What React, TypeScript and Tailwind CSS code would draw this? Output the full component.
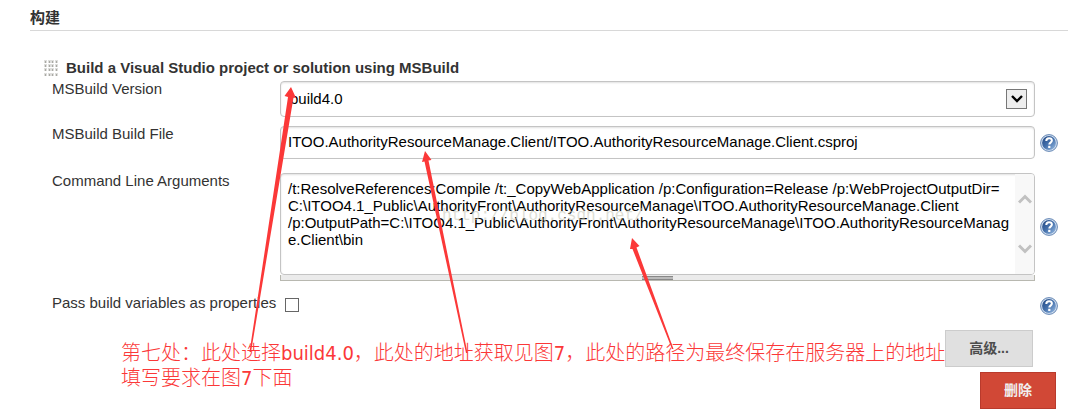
import { useState, type ReactNode } from "react";

const FIELD =
  "w-full rounded border border-[#c4c4c4] bg-white text-black shadow-[inset_0_1px_2px_rgba(0,0,0,0.12)]";

const ARGUMENTS = [
  "/t:ResolveReferences;Compile /t:_CopyWebApplication /p:Configuration=Release /p:WebProjectOutputDir=",
  "C:\\ITOO4.1_Public\\AuthorityFront\\AuthorityResourceManage\\ITOO.AuthorityResourceManage.Client",
  "/p:OutputPath=C:\\ITOO4.1_Public\\AuthorityFront\\AuthorityResourceManage\\ITOO.AuthorityResourceManag",
  "e.Client\\bin",
].join("\n");

const HelpButton = () => (
  <button type="button" aria-label="Help" className="block size-[18px]">
    <svg viewBox="0 0 18 18" className="size-full">
      <defs>
        <linearGradient id="help" x1="0" y1="0" x2="1" y2="1">
          <stop offset="0" stopColor="#1f4580" />
          <stop offset="0.5" stopColor="#4672ad" />
          <stop offset="1" stopColor="#9abde4" />
        </linearGradient>
      </defs>
      <circle cx="9" cy="9" r="8.4" fill="#d3e0f0" stroke="#6486b4" />
      <circle cx="9" cy="9" r="6.9" fill="url(#help)" />
      <path
        d="M6.3 6.9C6.3 5 7.5 4.2 9.1 4.2c1.6 0 2.8.9 2.8 2.4 0 2-2.6 2-2.6 4"
        fill="none"
        stroke="#fff"
        strokeWidth="2"
      />
      <rect x="8.2" y="11.8" width="2.2" height="2.2" fill="#fff" />
    </svg>
  </button>
);

type RowProps = {
  label: string;
  id: string;
  help?: boolean;
  className?: string;
  children: ReactNode;
};

const Row = ({ label, id, help, className, children }: RowProps) => (
  <div className={`flex ${className ?? ""}`}>
    <label htmlFor={id} className="w-[228px] shrink-0 leading-4 whitespace-nowrap">
      {label}
    </label>
    <div className="min-w-0 flex-1">{children}</div>
    <div className="ml-[5px] flex w-[18px] shrink-0 items-center">
      {help && <HelpButton />}
    </div>
  </div>
);

const DragHandle = () => (
  <svg viewBox="0 0 14 16" className="h-4 w-[14px]">
    {[0, 4, 7, 11].map((x) =>
      [0, 4, 8, 13].map((y) => (
        <g key={`${x}-${y}`}>
          <rect x={x} y={y} width="3" height="3" fill="#dededc" />
          <rect x={x + 1} y={y + 1} width="1" height="2" fill="#a9a9a4" />
        </g>
      ))
    )}
  </svg>
);

const Chevron = ({ down }: { down?: boolean }) => (
  <svg viewBox="0 0 14 10" className="h-[10px] w-[14px]">
    <path
      d={down ? "M1 1.5 7 7.5 13 1.5" : "M1 8.5 7 2.5 13 8.5"}
      fill="none"
      stroke="#c1c1c1"
      strokeWidth="3"
    />
  </svg>
);

// Hand-drawn notes lying over the form
const Annotations = () => (
  <div className="pointer-events-none absolute inset-0 overflow-hidden">
    <p className="absolute top-[206px] left-[442px] font-['Liberation_Mono',monospace] text-base leading-5 text-[#c8c8b8]/60">
      http://blog.csdn.net/
    </p>
    <svg className="absolute top-0 left-0 h-[410px] w-[1068px]" fill="#fb3838">
      <path d="M291 87 296 98 293.5 97.500 251 352H249.500L288 97 284.500 96Z" />
      <path d="M425 151 431.500 160 428.500 160.500 467.500 353H466L424.500 161.500 422 162Z" />
      <path d="M632 238 639.500 246 636.500 247.500 673.500 349H672L632.500 249 630 249Z" />
    </svg>
    <p className="absolute top-[341px] left-[121px] font-['DejaVu_Sans_Condensed','Noto_Sans_CJK_SC',sans-serif] text-xl leading-[25px] font-light whitespace-nowrap text-[#fb3838]">
      第七处：此处选择build4.0，此处的地址获取见图7，此处的路径为最终保存在服务器上的地址
      <br />
      填写要求在图7下面
    </p>
  </div>
);

export default function App() {
  const [passVariables, setPassVariables] = useState(false);

  return (
    <main className="relative bg-white pb-px font-['Liberation_Sans','Noto_Sans_CJK_SC',sans-serif] text-[15px] leading-[17px] text-[#333]">
      <h1 className="ml-[30px] border-b border-[#d8d8d8] pt-[9px] pb-[3px] text-[15px] leading-[18px] font-bold">
        构建
      </h1>
      <form className="pr-[10px] pl-[52px]" onSubmit={(e) => e.preventDefault()}>
        <div className="-ml-2 flex items-center gap-2 pt-[28px] pb-[4px]">
          <DragHandle />
          <h2 className="leading-[18px] font-bold">
            Build a Visual Studio project or solution using MSBuild
          </h2>
        </div>

        <Row id="version" label="MSBuild Version">
          <div className="relative">
            <select
              id="version"
              className={`${FIELD} block h-9 appearance-none px-[9px] pb-0.5`}
            >
              <option>build4.0</option>
            </select>
            <span className="pointer-events-none absolute top-2 right-2 flex h-5 w-[21px] items-center justify-center border border-[#777] bg-[#eee]">
              <svg viewBox="0 0 12 8" className="h-2 w-3">
                <path d="M1 1 6 6 11 1" fill="none" stroke="#000" strokeWidth="2.4" />
              </svg>
            </span>
          </div>
        </Row>

        <Row id="file" label="MSBuild Build File" help className="mt-[9px]">
          <input
            id="file"
            type="text"
            defaultValue="ITOO.AuthorityResourceManage.Client/ITOO.AuthorityResourceManage.Client.csproj"
            className={`${FIELD} block h-[33px] px-[7px] pb-0.5`}
          />
        </Row>

        <Row id="args" label="Command Line Arguments" help className="mt-[14px]">
          <div className={`${FIELD} flex h-[102px] overflow-hidden`}>
            <textarea
              id="args"
              defaultValue={ARGUMENTS}
              className="min-w-0 flex-1 resize-none overflow-hidden bg-transparent pt-1.5 pl-[7px]"
            />
            <div className="flex w-[19px] flex-col items-center justify-center gap-10 bg-[#f8f8f8]">
              <Chevron />
              <Chevron down />
            </div>
          </div>
          <div className="flex h-1.5 items-center justify-center border-x border-b border-[#b8b8b0] bg-[#ebebeb]">
            <span className="h-1 w-[31px] border-y border-[#888] bg-[#bbb]" />
          </div>
        </Row>

        <Row
          id="pass"
          label="Pass build variables as properties"
          help
          className="mt-[14px]"
        >
          <input
            id="pass"
            type="checkbox"
            checked={passVariables}
            onChange={(e) => setPassVariables(e.target.checked)}
            className="mt-[3px] mb-1 ml-[5px] block size-[14px] appearance-none border border-[#666] bg-white checked:bg-[#777]"
          />
        </Row>

        <div className="mt-[14px] flex flex-col items-end gap-[5px] text-sm leading-[19px] font-bold">
          <button
            type="button"
            className="mr-[25px] h-[37px] w-[88px] border border-[#ccc] bg-[#e0e0e0] text-[#4d4d4d]"
          >
            高级...
          </button>
          <button
            type="button"
            className="mr-[2px] h-[37px] w-[76px] border border-[#b93a2c] bg-[#d14836] text-[#f0f0f0]"
          >
            删除
          </button>
        </div>
      </form>
      <Annotations />
    </main>
  );
}
